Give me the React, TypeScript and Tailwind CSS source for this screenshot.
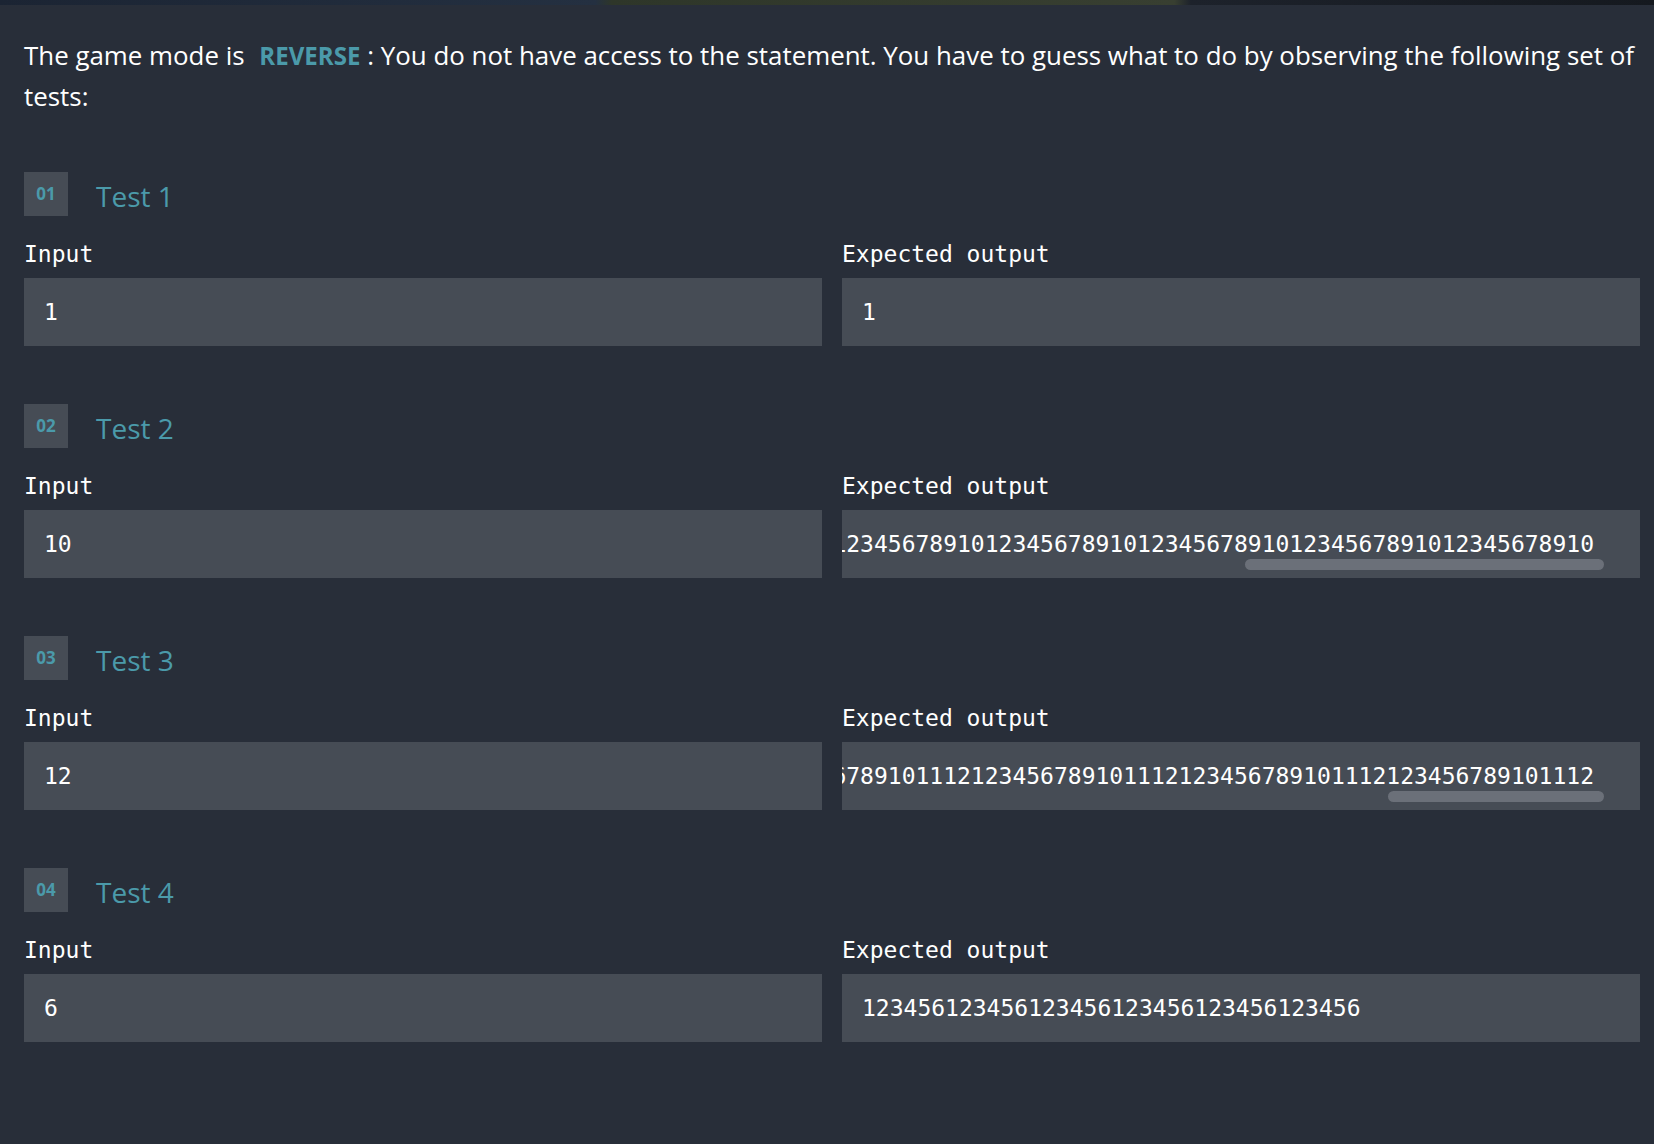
import React from "react";

type Test = { n: number; input: string; output: string; thumb?: { left: number; width: number } };

const tests: Test[] = [
  { n: 1, input: "1", output: "1" },
  { n: 2, input: "10", output: "12345678910".repeat(10), thumb: { left: 403, width: 359 } },
  { n: 3, input: "12", output: "123456789101112".repeat(12), thumb: { left: 546, width: 216 } },
  { n: 4, input: "6", output: "123456".repeat(6) },
];

const mono = "font-['DejaVu_Sans_Mono','Liberation_Mono',monospace]";

function ValueBox({ value, thumb }: { value: string; thumb?: Test["thumb"] }) {
  return (
    <div className="relative h-[68px] bg-[#464c55] overflow-hidden flex items-center justify-end pl-5 pr-[46px]">
      {thumb ? (
        <span className={`${mono} text-[23px] text-white whitespace-nowrap shrink-0`}>{value}</span>
      ) : (
        <span className={`${mono} text-[23px] text-white whitespace-nowrap mr-auto`}>{value}</span>
      )}
      {thumb && (
        <div
          className="absolute bottom-[8px] h-[11px] rounded-full bg-[#6b7079]"
          style={{ left: thumb.left, width: thumb.width }}
        />
      )}
    </div>
  );
}

function TestBlock({ t }: { t: Test }) {
  return (
    <div className="pb-[58px]">
      <div className="flex items-center h-[44px]">
        <div className="w-[44px] h-[44px] bg-[#464c55] flex items-center justify-center text-[17px] font-bold text-[#4b9aaa] font-['Open_Sans',sans-serif]">
          {String(t.n).padStart(2, "0")}
        </div>
        <div className="ml-[28px] text-[28px] text-[#4b9aaa] font-['Open_Sans',sans-serif] leading-none pt-[4px]">
          Test {t.n}
        </div>
      </div>
      <div className="grid grid-cols-2 gap-[20px] mt-[22px]">
        <div>
          <div className={`${mono} text-[23px] leading-[32px] text-white mb-[8px]`}>Input</div>
          <ValueBox value={t.input} />
        </div>
        <div>
          <div className={`${mono} text-[23px] leading-[32px] text-white mb-[8px]`}>Expected output</div>
          <ValueBox value={t.output} thumb={t.thumb} />
        </div>
      </div>
    </div>
  );
}

export default function App() {
  return (
    <div className="min-h-[1144px] bg-[#282e39] text-white">
      <div className="h-[5px] bg-[linear-gradient(90deg,#1b2433_0%,#243041_36%,#2e3629_37%,#383f31_71%,#1d222b_72%,#15191f_100%)]" />
      <div className="pl-[24px] pr-[14px]">
        <p className="mt-[30px] mr-[-14px] text-[25.9px] leading-[40px] font-['Open_Sans',sans-serif] text-white">
          The game mode is{" "}
          <span className="font-bold text-[0.93em] text-[#4b9aaa] ml-[8px]">REVERSE</span> : You do not have
          access to the statement. You have to guess what to do by observing the following set of tests:
        </p>
        <div className="mt-[56px]">
          {tests.map((t) => (
            <TestBlock key={t.n} t={t} />
          ))}
        </div>
      </div>
    </div>
  );
}
